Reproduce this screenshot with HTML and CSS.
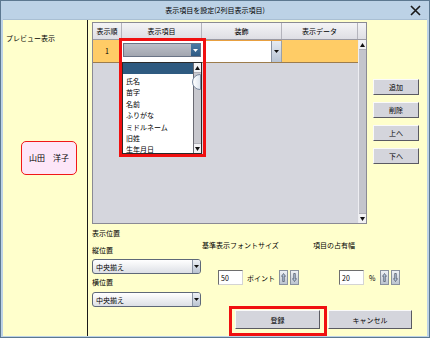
FILE: index.html
```html
<!DOCTYPE html>
<html lang="ja">
<head>
<meta charset="utf-8">
<title>表示項目を設定</title>
<link rel="stylesheet" href="styles.css">
</head>
<body>
<div class="window">
  <div class="titlebar">
    <span></span>
    <span class="title">表示項目を設定(2列目表示項目)</span>
    <svg class="close" width="11" height="11" viewBox="0 0 11 11"><path d="M1 1L10 10M10 1L1 10" stroke="#1a1a1a" stroke-width="1.6" fill="none"/></svg>
  </div>
  <div class="body">
    <aside class="left">
      <div class="left-label">プレビュー表示</div>
      <div class="preview">山田　洋子</div>
    </aside>
    <main class="main">
      <div class="top">
        <div class="grid">
          <div class="grid-head">
            <div class="th w1">表示順</div>
            <div class="th w2">表示項目</div>
            <div class="th w3">装飾</div>
            <div class="th w4">表示データ</div>
            <div class="th w5"></div>
          </div>
          <div class="grid-body">
            <div class="rows">
              <div class="row">
                <div class="td w1 orange">1</div>
                <div class="td w2 cell-combo">
                  <div class="combo"><span class="combo-btn"><svg width="5" height="3" viewBox="0 0 5 3"><path d="M0 0H5L2.5 3Z" fill="#fff"/></svg></span></div>
                </div>
                <div class="td w3 cell-deco"><span class="deco-btn"><svg width="5" height="3" viewBox="0 0 5 3"><path d="M0 0H5L2.5 3Z" fill="#111"/></svg></span></div>
                <div class="td w4 orange"></div>
              </div>
            </div>
            <div class="vscroll">
              <div class="sb-btn"><svg width="5" height="4" viewBox="0 0 5 4"><path d="M2.5 0L5 4H0Z" fill="#111"/></svg></div>
              <div class="sb-track"></div>
              <div class="sb-btn"><svg width="5" height="4" viewBox="0 0 5 4"><path d="M0 0H5L2.5 4Z" fill="#111"/></svg></div>
            </div>
          </div>
          <div class="dropdown">
            <div class="dd-items">
              <div class="dd-item sel"></div>
              <div class="dd-item">氏名</div>
              <div class="dd-item">苗字</div>
              <div class="dd-item">名前</div>
              <div class="dd-item">ふりがな</div>
              <div class="dd-item">ミドルネーム</div>
              <div class="dd-item">旧姓</div>
              <div class="dd-item">生年月日</div>
            </div>
            <div class="dd-scroll">
              <div class="sb-btn"><svg width="5" height="4" viewBox="0 0 5 4"><path d="M2.5 0L5 4H0Z" fill="#111"/></svg></div>
              <div class="dd-track"><div class="dd-thumb"></div></div>
              <div class="sb-btn"><svg width="5" height="4" viewBox="0 0 5 4"><path d="M0 0H5L2.5 4Z" fill="#111"/></svg></div>
            </div>
          </div>
          <div class="mark mark-combo"></div>
        </div>
        <div class="side-buttons">
          <button class="btn side">追加</button>
          <button class="btn side">削除</button>
          <button class="btn side">上へ</button>
          <button class="btn side">下へ</button>
        </div>
      </div>

      <div class="settings">
        <div class="sec-label">表示位置</div>
        <div class="settings-row">
          <div class="col-pos">
            <div class="lbl lbl-v">縦位置</div>
            <div class="select sel-1"><span>中央揃え</span><span class="select-btn"><svg width="5" height="3" viewBox="0 0 5 3"><path d="M0 0H5L2.5 3Z" fill="#111"/></svg></span></div>
            <div class="lbl lbl-h">横位置</div>
            <div class="select sel-2"><span>中央揃え</span><span class="select-btn"><svg width="5" height="3" viewBox="0 0 5 3"><path d="M0 0H5L2.5 3Z" fill="#111"/></svg></span></div>
          </div>
          <div class="col-font">
            <div class="lbl lbl-top">基準表示フォントサイズ</div>
            <div class="num-row num-font">
              <div class="num-input">50</div>
              <span class="unit">ポイント</span>
              <span class="spin"><svg width="5" height="9" viewBox="0 0 5 9"><path d="M2.5 0.5L4.5 3.3H3.3V8.5H1.7V3.3H0.5Z" fill="#b3c6e0" stroke="#3a404c" stroke-width="0.6"/></svg></span>
              <span class="spin"><svg width="5" height="9" viewBox="0 0 5 9"><path d="M2.5 8.5L4.5 5.7H3.3V0.5H1.7V5.7H0.5Z" fill="#b3c6e0" stroke="#3a404c" stroke-width="0.6"/></svg></span>
            </div>
          </div>
          <div class="col-width">
            <div class="lbl lbl-top">項目の占有幅</div>
            <div class="num-row num-width">
              <div class="num-input">20</div>
              <span class="unit">%</span>
              <span class="spin"><svg width="5" height="9" viewBox="0 0 5 9"><path d="M2.5 0.5L4.5 3.3H3.3V8.5H1.7V3.3H0.5Z" fill="#b3c6e0" stroke="#3a404c" stroke-width="0.6"/></svg></span>
              <span class="spin"><svg width="5" height="9" viewBox="0 0 5 9"><path d="M2.5 8.5L4.5 5.7H3.3V0.5H1.7V5.7H0.5Z" fill="#b3c6e0" stroke="#3a404c" stroke-width="0.6"/></svg></span>
            </div>
          </div>
        </div>
      </div>

      <div class="footer">
        <div class="btn-wrap">
          <button class="btn foot foot-ok">登録</button>
          <div class="mark mark-ok"></div>
        </div>
        <button class="btn foot foot-cancel">キャンセル</button>
      </div>
    </main>
  </div>
</div>
</body>
</html>
```
FILE: styles.css
```css
* { box-sizing: border-box; }
html, body { margin: 0; padding: 0; }
body {
  width: 430px;
  height: 338px;
  overflow: hidden;
  font-family: "Noto Sans CJK JP", "Noto Sans", sans-serif;
  font-size: 7px;
  line-height: 10px;
  color: #000;
  background: #ffffff;
}

.window {
  width: 430px;
  height: 338px;
  border: 1px solid #5c7890;
  background: #bcd2e6;
  padding: 0 2px 1px 2px;
  display: flex;
  flex-direction: column;
}

.titlebar {
  height: 18px;
  display: grid;
  grid-template-columns: 1fr auto 1fr;
  align-items: center;
}
.title { font-size: 7px; color: #000; }
.close { justify-self: end; margin-right: 6px; }

.body {
  flex: 1;
  display: flex;
  background: #ffffcc;
  border-top: 1px solid #a9bfd3;
}

/* left preview panel */
.left {
  width: 85px;
  border-right: 1px solid #1a1a1a;
  padding-left: 3px;
  display: flex;
  flex-direction: column;
  align-items: flex-start;
}
.left-label { margin-top: 13px; }
.preview {
  margin-top: 98px;
  margin-left: 15px;
  width: 56px;
  height: 34px;
  border: 1.5px solid #f01818;
  border-radius: 5px;
  background: #fde6f8;
  display: flex;
  align-items: center;
  justify-content: center;
  font-size: 8px;
}

/* main */
.main {
  flex: 1;
  padding: 2px 0 0 4px;
  display: flex;
  flex-direction: column;
}
.top { display: flex; gap: 6px; }

.grid {
  position: relative;
  width: 275px;
  height: 202px;
  border: 1px solid #8a8a94;
  background: #d5d6dd;
  display: flex;
  flex-direction: column;
}
.grid-head {
  display: flex;
  height: 17px;
  border-bottom: 1px solid #9a9aa4;
  background: linear-gradient(#f4f4f6, #dedee4);
}
.th {
  border-right: 1px solid #b4b4bc;
  display: flex;
  align-items: center;
  justify-content: center;
}
.w1 { width: 29px; }
.w2 { width: 80px; }
.w3 { width: 80px; }
.w4 { width: 76px; }
.w5 { width: 8px; border-right: none; }

.grid-body { flex: 1; display: flex; }
.rows { width: 265px; }
.row {
  display: flex;
  height: 23px;
  border-bottom: 1px solid #9c7c4c;
}
.td { height: 100%; display: flex; align-items: center; justify-content: center; }
.orange { background: #ffcc66; }
.w1.orange { border-right: 1px solid #d9a850; }
.cell-combo {
  background: #ffffff;
  padding: 3px 1px 5px 1px;
  align-items: stretch;
  justify-content: stretch;
}
.combo {
  flex: 1;
  display: flex;
  justify-content: flex-end;
  border: 1px solid #6a7486;
  background: linear-gradient(#bcc0c8, #a2a6b0);
}
.combo-btn {
  width: 9px;
  background: linear-gradient(#4a7aa4, #2e5a84);
  display: flex;
  align-items: center;
  justify-content: center;
}
.cell-deco {
  background: #ffffff;
  border-top: 1px solid #e8a040;
  border-right: 1px solid #9aa0aa;
  justify-content: flex-end;
  align-items: stretch;
}
.deco-btn {
  width: 10px;
  border-left: 1px solid #8a94a4;
  background: linear-gradient(#e6ebf2, #b8c4d4);
  display: flex;
  align-items: center;
  justify-content: center;
}

.vscroll {
  width: 8px;
  display: flex;
  flex-direction: column;
  background: #c4c5cc;
  border-left: 1px solid #eeeef2;
}
.sb-btn {
  height: 10px;
  display: flex;
  align-items: center;
  justify-content: center;
  background: #f2f2f4;
  border-bottom: 1px solid #b0b0b8;
}
.sb-btn + .sb-track + .sb-btn,
.dd-track + .sb-btn { border-bottom: none; border-top: 1px solid #b0b0b8; }
.sb-track { flex: 1; }

/* dropdown list overlay */
.dropdown {
  position: absolute;
  left: 29px;
  top: 39px;
  width: 80px;
  height: 92px;
  background: #ffffff;
  border: 1px solid #2a2a2a;
  display: flex;
  overflow: hidden;
}
.dd-items { flex: 1; overflow: hidden; }
.dd-item {
  height: 11.4px;
  line-height: 11.4px;
  padding-left: 3px;
  white-space: nowrap;
}
.dd-item.sel {
  height: 11px;
  background: #2e5a80;
  margin-bottom: 2px;
}
.dd-scroll {
  width: 8px;
  display: flex;
  flex-direction: column;
  background: #c8c8ce;
  border-left: 1px solid #6a6a72;
}
.dd-track { flex: 1; padding-top: 1px; }
.dd-thumb {
  height: 16px;
  margin-left: -2px;
  border: 1px solid #7a8aa0;
  border-radius: 8px 0 0 8px;
  background: linear-gradient(90deg, #ffffff, #dfe6ef);
}

/* red annotation boxes */
.mark {
  position: absolute;
  border: 3px solid #f01010;
  pointer-events: none;
}
.mark-combo {
  left: 26px;
  top: 15px;
  width: 87px;
  height: 119px;
}

/* side buttons */
.side-buttons {
  margin-top: 57px;
  display: flex;
  flex-direction: column;
  gap: 7px;
}
.btn {
  font-family: inherit;
  font-size: 7px;
  line-height: 10px;
  color: #000;
  padding: 0;
  background: #d4d5dc;
  border: 1px solid;
  border-color: #fafafa #5a5a62 #5a5a62 #fafafa;
}
.side { width: 46px; height: 16px; }

/* settings */
.settings { margin-top: 4px; }
.settings-row { display: flex; align-items: flex-start; }
.col-pos { width: 110px; display: flex; flex-direction: column; }
.lbl-v { margin-top: 7px; }
.lbl-h { margin-top: 3px; }
.select {
  width: 109px;
  height: 15px;
  border: 1px solid #5e6878;
  border-radius: 3px;
  background: linear-gradient(#ffffff, #dde0e6);
  display: flex;
  align-items: center;
  justify-content: space-between;
  padding-left: 3px;
  overflow: hidden;
}
.sel-1 { margin-top: 4px; }
.sel-2 { margin-top: 5px; }
.select-btn {
  width: 8px;
  height: 100%;
  border-left: 1px solid #8a94a4;
  background: linear-gradient(#eef1f5, #b9c3d1);
  display: flex;
  align-items: center;
  justify-content: center;
}

.col-font { width: 111px; }
.col-width { flex: 1; }
.lbl-top { margin-top: 2px; }
.num-row { margin-top: 20px; display: flex; align-items: center; }
.num-font { padding-left: 16px; }
.num-width { padding-left: 26px; }
.num-input {
  width: 25px;
  height: 15px;
  background: #ffffff;
  border: 1px solid;
  border-color: #6e6e6e #d4d4d4 #d4d4d4 #6e6e6e;
  padding-left: 2px;
  display: flex;
  align-items: center;
}
.unit { margin-left: 4px; margin-right: 4px; }
.num-width .unit { margin-left: 5px; margin-right: 5px; }
.spin {
  width: 9px;
  height: 15px;
  margin-right: 2px;
  border: 1px solid #8a929e;
  background: linear-gradient(#eef1f5, #bcc4d0);
  display: flex;
  align-items: center;
  justify-content: center;
}

/* footer */
.footer {
  margin-top: 3px;
  display: flex;
  justify-content: flex-end;
  gap: 8px;
  padding-right: 15px;
}
.btn-wrap { position: relative; }
.foot { height: 19px; }
.foot-ok { width: 85px; display: block; }
.foot-cancel { width: 84px; }
.mark-ok {
  left: -6px;
  top: -4px;
  right: -7px;
  bottom: -7px;
}
```
